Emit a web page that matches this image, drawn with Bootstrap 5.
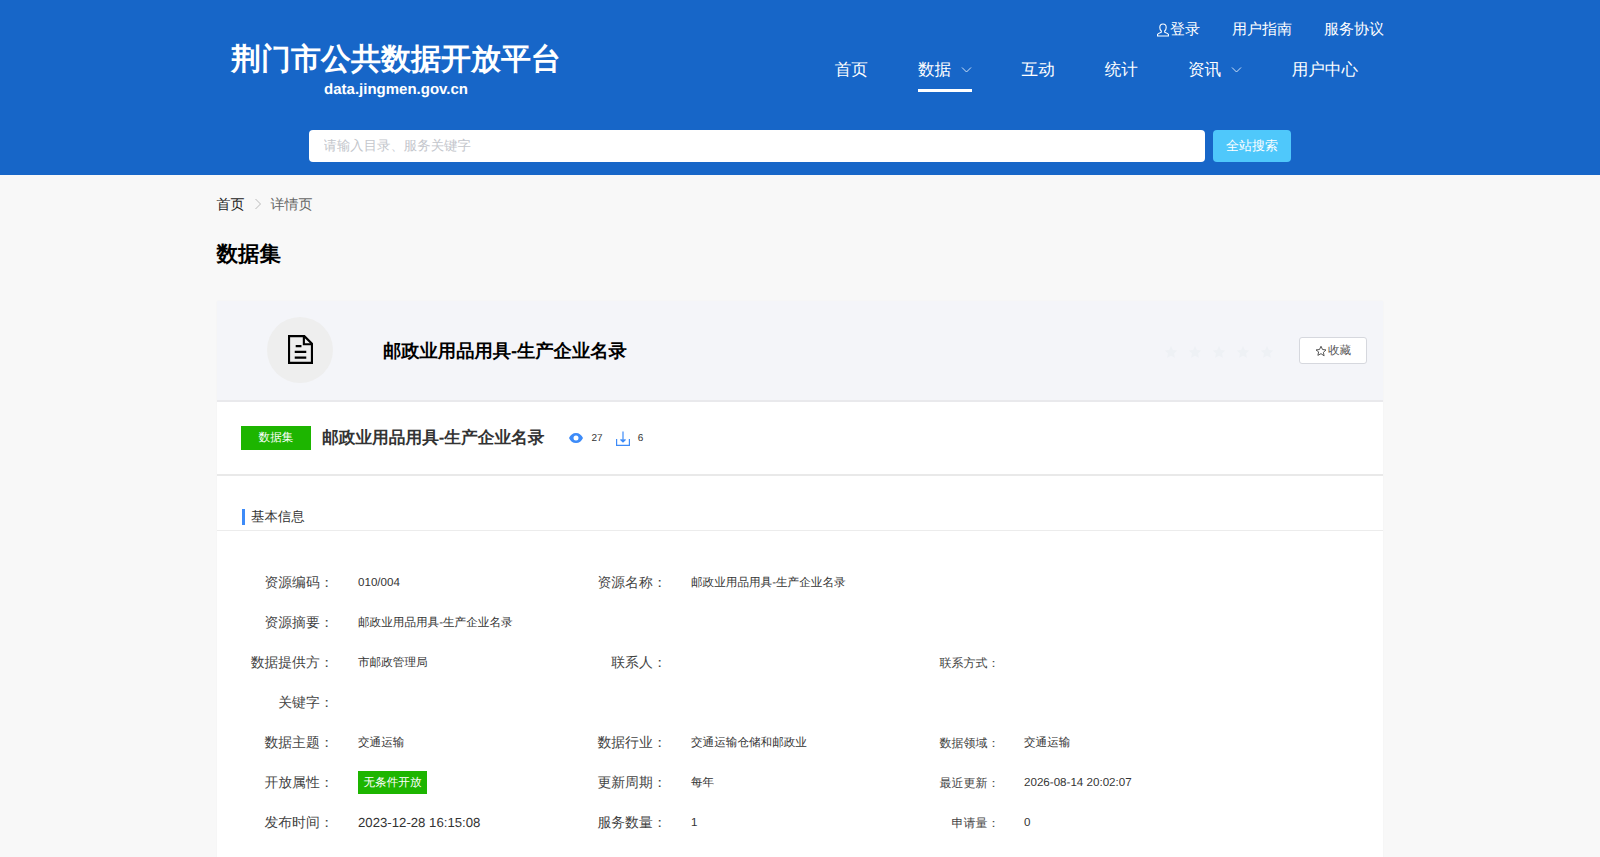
<!DOCTYPE html>
<html>
<head>
<meta charset="utf-8">
<title>荆门市公共数据开放平台</title>
<link href="https://cdn.jsdelivr.net/npm/bootstrap@5.3.0/dist/css/bootstrap.min.css" rel="stylesheet">
<style>
body{background:#f8f8f8;font-family:"Liberation Sans",sans-serif;color:#333;font-size:14px;text-rendering:geometricPrecision}
.site-head{background:#1766c8;height:175px;color:#fff}
.wrap-main{width:1166px;margin:0 auto}
.head-top{height:130px}
.brand-box{width:330px;margin-left:14px;margin-top:39px;text-align:center}
.brand-name{font-size:30px;font-weight:700;line-height:42px;color:#fff}
.brand-url{font-size:15px;font-weight:700;line-height:18px}
.top-links{padding-top:18px;gap:32px;font-size:15px;line-height:24px;margin-right:-1px}
.top-links a,.main-nav a{color:#fff;text-decoration:none}
.main-nav{margin-top:16px;margin-right:25px;gap:50px;font-size:16.6px;line-height:24px}
.main-nav a{display:flex;align-items:center;gap:9.500px;padding-bottom:7px;border-bottom:3px solid transparent}
.main-nav a.current{border-bottom-color:#fff}
.search-row{padding-left:92px;gap:8px}
.search-input.form-control{width:896px;height:32px;border:0;border-radius:4px;padding:0 14.500px 2px;font-size:13.4px;text-rendering:geometricPrecision}
.search-input.form-control::placeholder{color:#c3c6cc}
.search-btn.btn{width:78px;height:32px;padding:0;border:0;border-radius:4px;background:#4fc8fb;color:#fff;font-size:13px}
.crumb-row{padding-top:19px;line-height:20px;gap:9px;color:#666;margin-left:-.5px}
.crumb-row a{color:#222;text-decoration:none}
.page-title{font-size:21.5px;font-weight:700;color:#000;line-height:30px;margin:25px 0 32px -.5px}
.detail-card{background:#fff;border-radius:0;border:0;box-shadow:0 0 2px rgba(0,0,0,.03)}
.detail-head{height:101px;background:#f4f5f9;border-bottom:2px solid #e9e9ec;padding-left:50px;padding-right:16px}
.doc-circle{width:66px;height:66px;border-radius:50%;background:#eeeeee;flex:none;margin-bottom:2px}
.detail-name{font-size:18.3px;font-weight:700;color:#000;margin:0 0 0 50px;line-height:26px}
.star-row{gap:10px;margin-right:25px;margin-top:2px}
.fav-btn.btn{width:68px;height:27px;padding:0;background:#fff;border:1px solid #d6d8de;border-radius:3px;font-size:11.6px;color:#555;display:flex;align-items:center;justify-content:center;gap:1px;text-rendering:geometricPrecision}
.sub-head{height:74px;border-bottom:2px solid #e9e9e9;padding-left:24px}
.kind-tag{width:70px;height:24px;line-height:24px;text-align:center;background:#1db500;color:#fff;font-size:11.6px}
.sub-name{font-size:16.7px;font-weight:700;color:#333;margin:0 24px 0 11px;line-height:24px}
.stat-num{font-size:10px;color:#333}
.stat-eye{margin-right:9px}
.stat-dl{margin:0 8px 0 13px}
.section-head{height:55px;border-bottom:1px solid #ececec;padding:33px 0 0 25px}
.section-title{border-left:3px solid #3d8bf8;padding-left:6px;line-height:16px;font-size:13.4px;color:#333}
.info-grid{display:grid;grid-template-columns:333px 333px 1fr;grid-auto-rows:40px;padding:32px 0 45px 25px}
.info-item{display:flex;align-items:center}
.info-wide{grid-column:1 / -1}
.info-second{grid-column:2 / -1}
.info-label{width:91.500px;margin-right:24.500px;text-align:right;flex:none;font-size:13.8px;color:#444;white-space:nowrap}
.info-label.tiny{font-size:12px}
.info-val{font-size:11.6px;color:#333;white-space:nowrap}
.info-val.big{font-size:13.2px}
.open-tag{display:block;width:69px;height:23px;line-height:23px;text-align:center;background:#1db500;color:#fff;font-size:11.6px;margin-top:-1px}
</style>
</head>
<body>
<header class="site-head">
  <div class="wrap-main">
    <div class="head-top d-flex justify-content-between">
      <div class="brand-box">
        <div class="brand-name">荆门市公共数据开放平台</div>
        <div class="brand-url">data.jingmen.gov.cn</div>
      </div>
      <div class="d-flex flex-column align-items-end">
        <div class="top-links d-flex">
          <a href="#" class="d-flex align-items-center"><svg width="14" height="14" viewBox="0 0 14 14" fill="none" stroke="#fff" stroke-width="1.1"><path d="M7 1C4.900 1 3.800 2.500 3.800 4.400C3.800 6 4.500 7.200 5.300 8L5.300 9.200C4 9.700 2.100 10.500 1.600 11.200V13H12.400V11.200C11.900 10.500 10 9.700 8.700 9.200V8C9.500 7.200 10.200 6 10.200 4.400C10.200 2.500 9.100 1 7 1Z"/></svg>登录</a>
          <a href="#">用户指南</a>
          <a href="#">服务协议</a>
        </div>
        <nav class="main-nav d-flex">
          <a href="#">首页</a>
          <a href="#" class="current">数据<svg width="11" height="6" viewBox="0 0 11 6" fill="none" stroke="#cfe0f5" stroke-width="1"><path d="M1 .5 5.500 5 10 .5"/></svg></a>
          <a href="#">互动</a>
          <a href="#">统计</a>
          <a href="#">资讯<svg width="11" height="6" viewBox="0 0 11 6" fill="none" stroke="#cfe0f5" stroke-width="1"><path d="M1 .5 5.500 5 10 .5"/></svg></a>
          <a href="#">用户中心</a>
        </nav>
      </div>
    </div>
    <form class="search-row d-flex">
      <input class="search-input form-control" type="text" placeholder="请输入目录、服务关键字">
      <button class="search-btn btn" type="button">全站搜索</button>
    </form>
  </div>
</header>
<main class="wrap-main">
  <div class="crumb-row d-flex align-items-center">
    <a href="#">首页</a>
    <svg width="8" height="12" viewBox="0 0 8 12" fill="none" stroke="#bbb" stroke-width="1"><path d="M1.500 1 6.500 6 1.500 11"/></svg>
    <span>详情页</span>
  </div>
  <h1 class="page-title">数据集</h1>
  <section class="detail-card card">
    <div class="detail-head d-flex align-items-center">
      <div class="doc-circle d-flex align-items-center justify-content-center">
        <svg width="25" height="29" viewBox="0 0 26 30" fill="none" stroke="#000" stroke-width="2.200"><path d="M1.100 1.100H17L24.900 9V28.900H1.100Z"/><path d="M16.500 1.100V9.500H24.900"/><path d="M8 11.500H14M7 17.500H19M7 23.500H19"/></svg>
      </div>
      <h2 class="detail-name">邮政业用品用具-生产企业名录</h2>
      <div class="star-row d-flex ms-auto">
        <svg width="14" height="14" viewBox="0 0 24 24" fill="#eef1f5"><path d="M12 1.500l3.200 6.900 7.500.9-5.500 5.200 1.400 7.500L12 18.400l-6.600 3.600 1.400-7.500-5.500-5.200 7.500-.9z"/></svg>
        <svg width="14" height="14" viewBox="0 0 24 24" fill="#eef1f5"><path d="M12 1.500l3.200 6.900 7.500.9-5.500 5.200 1.400 7.500L12 18.400l-6.600 3.600 1.400-7.500-5.500-5.200 7.500-.9z"/></svg>
        <svg width="14" height="14" viewBox="0 0 24 24" fill="#eef1f5"><path d="M12 1.500l3.200 6.900 7.500.9-5.500 5.200 1.400 7.500L12 18.400l-6.600 3.600 1.400-7.500-5.500-5.200 7.500-.9z"/></svg>
        <svg width="14" height="14" viewBox="0 0 24 24" fill="#eef1f5"><path d="M12 1.500l3.200 6.900 7.500.9-5.500 5.200 1.400 7.500L12 18.400l-6.600 3.600 1.400-7.500-5.500-5.200 7.500-.9z"/></svg>
        <svg width="14" height="14" viewBox="0 0 24 24" fill="#eef1f5"><path d="M12 1.500l3.200 6.900 7.500.9-5.500 5.200 1.400 7.500L12 18.400l-6.600 3.600 1.400-7.500-5.500-5.200 7.500-.9z"/></svg>
      </div>
      <button type="button" class="fav-btn btn"><svg width="12" height="12" viewBox="0 0 24 24" fill="none" stroke="#555" stroke-width="2"><path d="M12 2.500l3 6.500 7 .9-5.200 4.800 1.400 7L12 17.300l-6.200 3.400 1.400-7L2 9.900l7-.9z"/></svg>收藏</button>
    </div>
    <div class="sub-head d-flex align-items-center">
      <span class="kind-tag">数据集</span>
      <h3 class="sub-name">邮政业用品用具-生产企业名录</h3>
      <svg class="stat-eye" width="14" height="10" viewBox="0 0 14 10"><path fill="#3d8bf8" fill-rule="evenodd" d="M7 0C3.800 0 1.300 2 0 5c1.300 3 3.800 5 7 5s5.700-2 7-5C12.700 2 10.200 0 7 0Zm0 2.500A2.500 2.500 0 1 1 7 7.500 2.500 2.500 0 0 1 7 2.500Z"/></svg>
      <span class="stat-num">27</span>
      <svg class="stat-dl" width="14" height="15" viewBox="0 0 14 15" fill="none" stroke="#3d8bf8" stroke-width="1.200"><path d="M.6 8V14.400H13.400V8"/><path d="M7 .5V10.500"/><path d="M4.500 8.500 7 11l2.500-2.500" fill="#3d8bf8"/></svg>
      <span class="stat-num">6</span>
    </div>
    <div class="section-head">
      <div class="section-title">基本信息</div>
    </div>
    <div class="info-grid">
      <div class="info-item"><span class="info-label">资源编码：</span><span class="info-val">010/004</span></div>
      <div class="info-item info-second"><span class="info-label">资源名称：</span><span class="info-val">邮政业用品用具-生产企业名录</span></div>
      <div class="info-item info-wide"><span class="info-label">资源摘要：</span><span class="info-val">邮政业用品用具-生产企业名录</span></div>
      <div class="info-item"><span class="info-label">数据提供方：</span><span class="info-val">市邮政管理局</span></div>
      <div class="info-item"><span class="info-label">联系人：</span></div>
      <div class="info-item"><span class="info-label tiny">联系方式：</span></div>
      <div class="info-item info-wide"><span class="info-label">关键字：</span></div>
      <div class="info-item"><span class="info-label">数据主题：</span><span class="info-val">交通运输</span></div>
      <div class="info-item"><span class="info-label">数据行业：</span><span class="info-val">交通运输仓储和邮政业</span></div>
      <div class="info-item"><span class="info-label tiny">数据领域：</span><span class="info-val">交通运输</span></div>
      <div class="info-item"><span class="info-label">开放属性：</span><span class="open-tag">无条件开放</span></div>
      <div class="info-item"><span class="info-label">更新周期：</span><span class="info-val">每年</span></div>
      <div class="info-item"><span class="info-label tiny">最近更新：</span><span class="info-val">2026-08-14 20:02:07</span></div>
      <div class="info-item"><span class="info-label">发布时间：</span><span class="info-val big">2023-12-28 16:15:08</span></div>
      <div class="info-item"><span class="info-label">服务数量：</span><span class="info-val">1</span></div>
      <div class="info-item"><span class="info-label tiny">申请量：</span><span class="info-val">0</span></div>
    </div>
  </section>
</main>
<script src="https://cdn.jsdelivr.net/npm/bootstrap@5.3.0/dist/js/bootstrap.bundle.min.js"></script>
</body>
</html>
